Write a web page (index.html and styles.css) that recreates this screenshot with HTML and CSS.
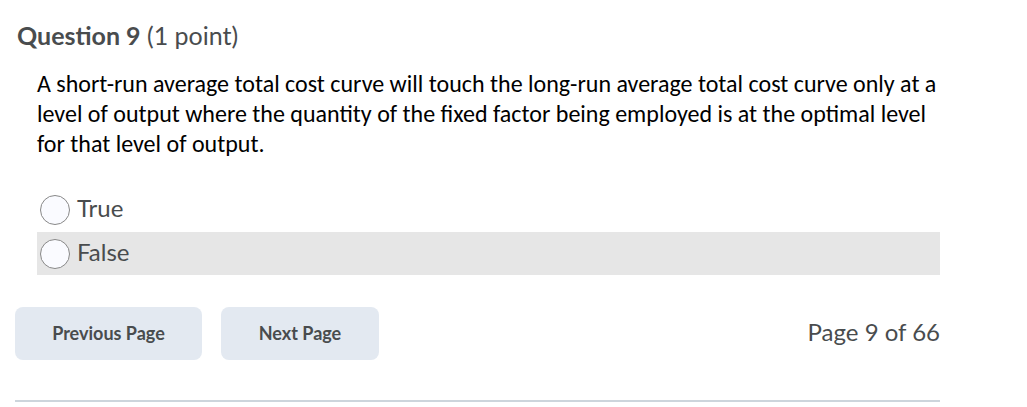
FILE: index.html
```html
<!DOCTYPE html>
<html>
<head>
<meta charset="utf-8">
<link rel="stylesheet" href="styles.css">
</head>
<body>
<div class="page">
  <h2 class="qtitle"><span class="qnum">Question 9</span> <span class="qpts">(1 point)</span></h2>
  <div class="qbody">
    <p class="qtext">A short-run average total cost curve will touch the long-run average total cost curve only at a level of output where the quantity of the fixed factor being employed is at the optimal level for that level of output.</p>
    <div class="options">
      <label class="opt"><span class="radio"></span><span class="optlabel">True</span></label>
      <label class="opt opt-hover"><span class="radio"></span><span class="optlabel">False</span></label>
    </div>
  </div>
  <div class="nav">
    <button class="btn btn-prev">Previous Page</button>
    <button class="btn btn-next">Next Page</button>
    <span class="pageinfo">Page 9 of 66</span>
  </div>
  <hr class="rule">
</div>
</body>
</html>
```
FILE: styles.css
```css
* { box-sizing: border-box; }
body {
  margin: 0;
  background: #fff;
  font-family: Lato, "Open Sans", sans-serif;
  color: #494c4e;
}
.page {
  width: 925px;
  margin-left: 15px;
  padding-top: 19px;
}
.qtitle {
  margin: 0 0 0 2px;
  font-size: 25px;
  line-height: 32px;
  font-weight: 400;
  color: #494c4e;
}
.qnum { font-weight: 700; }
.qbody {
  padding-left: 22px;
  margin-top: 18px;
}
.qtext {
  margin: 0;
  font-family: Carlito, "Open Sans", sans-serif;
  font-size: 24px;
  line-height: 30px;
  color: #000;
  width: 903px;
}
.options {
  margin-top: 29px;
  display: flex;
  flex-direction: column;
  gap: 1px;
}
.opt {
  display: flex;
  align-items: center;
  height: 43px;
  padding-left: 3px;
}
.opt-hover { background: #e6e6e6; }
.radio {
  width: 30px;
  height: 30px;
  border-radius: 50%;
  border: 1px solid #888;
  background: #fafbff;
  flex: none;
}
.optlabel {
  margin-left: 7px;
  padding-bottom: 4px;
  font-size: 24px;
  color: #494c4e;
}
.nav {
  display: flex;
  align-items: center;
  margin-top: 32px;
  gap: 19px;
}
.btn {
  border: none;
  border-radius: 8px;
  background: #e3e9f1;
  height: 53px;
  padding-bottom: 3px;
  font-family: Lato, sans-serif;
  font-weight: 700;
  font-size: 18px;
  color: #494c4e;
}
.btn-prev { width: 187px; }
.btn-next { width: 158px; }
.pageinfo {
  margin-left: auto;
  padding-bottom: 5px;
  font-size: 24px;
  color: #494c4e;
}
.rule {
  margin: 40px 0 0 0;
  border: none;
  border-top: 2px solid #cdd5dc;
}
```
